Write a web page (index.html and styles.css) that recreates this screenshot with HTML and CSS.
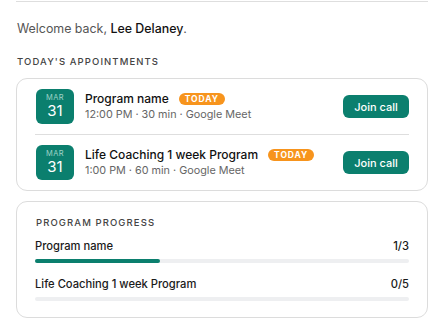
FILE: index.html
```html
<!DOCTYPE html>
<html>
<head>
  <title>Dashboard</title>
  <link rel="stylesheet" href="styles.css">
</head>
<body>
  <div class="page">
    <div class="top-rule"></div>

    <p class="welcome">Welcome back, <b>Lee Delaney</b>.</p>

    <h3 class="section-label">Today's appointments</h3>

    <div class="card appts">
      <div class="appt">
        <div class="date-tile">
          <span class="date-month">MAR</span>
          <span class="date-day">31</span>
        </div>
        <div class="appt-info">
          <div class="appt-title">Program name <span class="badge-today">TODAY</span></div>
          <div class="appt-meta">12:00 PM · 30 min · Google Meet</div>
        </div>
        <button class="btn-join">Join call</button>
      </div>

      <div class="appt">
        <div class="date-tile">
          <span class="date-month">MAR</span>
          <span class="date-day">31</span>
        </div>
        <div class="appt-info">
          <div class="appt-title">Life Coaching 1 week Program <span class="badge-today">TODAY</span></div>
          <div class="appt-meta">1:00 PM · 60 min · Google Meet</div>
        </div>
        <button class="btn-join">Join call</button>
      </div>
    </div>

    <div class="card progress">
      <h3 class="section-label in-card">Program progress</h3>

      <div class="prog-item">
        <div class="prog-row">
          <span>Program name</span>
          <span>1/3</span>
        </div>
        <div class="prog-bar"><div class="prog-fill" style="width: 33.33%;"></div></div>
      </div>

      <div class="prog-item">
        <div class="prog-row">
          <span>Life Coaching 1 week Program</span>
          <span>0/5</span>
        </div>
        <div class="prog-bar"><div class="prog-fill" style="width: 0%;"></div></div>
      </div>
    </div>
  </div>
</body>
</html>
```

FILE: styles.css
```css
body{
  margin: 0;
  background-color: white;
  color: #1a1a1a;
  font-family: Inter, "Noto Sans", sans-serif;
}

.page{
  padding: 1px 10px 0 16px;
}

.top-rule{
  height: 1px;
  background-color: #dedede;
}

.welcome{
  margin: 18px 0 0 1px;
  font-size: 12.4px;
  line-height: 17px;
  color: #555;
}

.welcome b{
  font-weight: 500;
  color: #111;
}

.section-label{
  margin: 18px 0 9px 1px;
  font-size: 9.5px;
  line-height: 14px;
  font-weight: 500;
  letter-spacing: 1.1px;
  text-transform: uppercase;
  color: #444;
}

.card{
  border: 1px solid #dcdcdc;
  border-radius: 11px;
  background-color: white;
}

.appts{
  padding: 0 18px;
}

.appt{
  display: flex;
  align-items: center;
  padding: 10px 0;
}

.appt + .appt{
  border-top: 1px solid #dedede;
}

.date-tile{
  width: 38px;
  height: 35px;
  margin-left: 1px;
  border-radius: 6px;
  background-color: #0b7f6e;
  display: flex;
  flex-direction: column;
  align-items: center;
  justify-content: center;
}

.date-month{
  font-size: 7.5px;
  line-height: 9px;
  letter-spacing: 0.4px;
  color: #9fd3c7;
}

.date-day{
  font-size: 15px;
  line-height: 18px;
  color: white;
}

.appt-info{
  flex: 1;
  margin-left: 11px;
}

.appt-title{
  font-size: 12px;
  line-height: 16px;
  font-weight: 500;
  color: #111;
  display: flex;
  align-items: center;
  gap: 10px;
}

.badge-today{
  background-color: #f7941d;
  color: white;
  font-size: 8.5px;
  line-height: 12px;
  font-weight: 700;
  letter-spacing: 0.9px;
  padding: 0 6px;
  border-radius: 7px;
}

.appt-meta{
  font-size: 10.8px;
  line-height: 15px;
  color: #666;
}

.btn-join{
  width: 66px;
  height: 23px;
  border: none;
  border-radius: 6px;
  background-color: #0b7f6e;
  color: white;
  font-family: Inter, "Noto Sans", sans-serif;
  font-size: 11px;
  font-weight: 500;
  cursor: pointer;
}

.progress{
  margin-top: 10px;
  padding: 14px 18px 16px;
}

.section-label.in-card{
  margin: 0 0 8px 1px;
}

.prog-item + .prog-item{
  margin-top: 13px;
}

.prog-row{
  display: flex;
  justify-content: space-between;
  font-size: 11.2px;
  line-height: 17px;
  font-weight: 500;
  color: #1a1a1a;
}

.prog-bar{
  margin-top: 4px;
  height: 4px;
  border-radius: 2px;
  background-color: #eeeff1;
}

.prog-fill{
  height: 4px;
  border-radius: 2px;
  background-color: #0b7f6e;
}
```
